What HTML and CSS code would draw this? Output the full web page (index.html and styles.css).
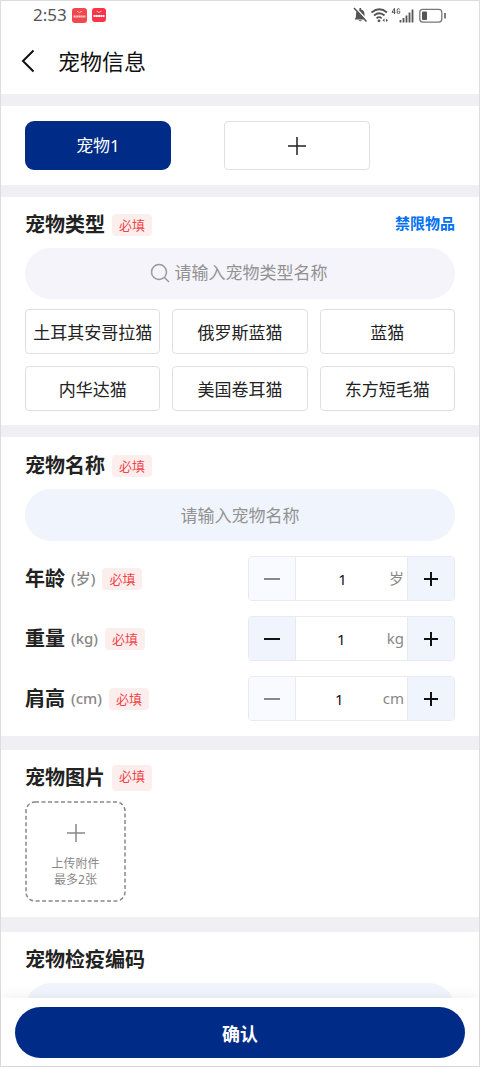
FILE: index.html
```html
<!DOCTYPE html>
<html lang="zh-CN">
<head>
<meta charset="utf-8">
<meta name="viewport" content="width=device-width, initial-scale=1">
<title>宠物信息</title>
<link rel="stylesheet" href="styles.css">
</head>
<body>
<div class="app">
  <div class="status">
    <span class="status-time">2:53</span>
    <svg class="status-app" width="15" height="15" viewBox="0 0 15 15"><rect width="15" height="15" rx="3" fill="#f0494d"/><path d="M5 3.200q2.500 3 5 0" fill="none" stroke="#fbb" stroke-width="1"/><path d="M1.500 8.500h12" stroke="#fcc" stroke-width="1.800" stroke-dasharray="1.500 .3"/></svg>
    <svg class="status-app" width="14" height="14" viewBox="0 0 14 14"><rect width="14" height="14" rx="3" fill="#fb3448"/><path d="M4.500 3q2.500 3 5 0" fill="none" stroke="#fbb" stroke-width="1"/><path d="M1.500 8h11" stroke="#fff" stroke-width="1.800" stroke-dasharray="2 .3"/></svg>
    <svg class="status-icons" width="94" height="18" viewBox="0 0 94 18" fill="none" stroke="#555">
      <path d="M1.500 13.500h11.500c-1.500-1.500-1.500-3-1.500-5.500 0-2.500-1.500-4.500-4.200-4.500S3 5.500 3 8c0 2.500 0 4-1.500 5.500z" fill="#555" stroke="none"/>
      <path d="M5.500 14.300h3.600q-1.800 2-3.600 0zM6.500 2h1.600v2H6.500z" fill="#555" stroke="none"/>
      <path d="M2.500 1.500l12 13" stroke="#fff" stroke-width="1.500"/>
      <path d="M1 2l12.500 13.500" stroke-width="1.500"/>
      <path d="M18.500 6.500q8-6.500 15.500 0M21 9.500q5.500-4.500 10.500 0M23.500 12.300q2.700-2.200 5.200 0" stroke-width="1.700"/>
      <circle cx="26" cy="14.800" r="1.400" fill="#555" stroke="none"/>
      <path d="M31.500 12.500L29.500 14.200l2 1.700zM33 12.500l2 1.700-2 1.700z" fill="#555" stroke="none"/>
      <path d="M41.500 8V2.300L39 6.300h3.500M46.700 3.600q-.3-1-1.200-1-1.300 0-1.300 1.500v2q0 1.500 1.300 1.500t1.300-1.500v-.8h-1.300" stroke-width="1"/>
      <path d="M47.500 14v2.500M50.500 12v4.500M53.500 9.500v7M56.500 6.500v10M59.500 3.500v13" stroke-width="1.800"/>
      <rect x="66.800" y="3.300" width="22" height="12.800" rx="3" stroke="#777" stroke-width="1.300"/>
      <rect x="69" y="5.500" width="5" height="8.500" rx="1" fill="#555" stroke="none"/>
      <path d="M92 7v5.500" stroke-width="1.500"/>
    </svg>
  </div>
  <header class="nav">
    <button class="back" type="button" aria-label="返回">
      <svg width="14" height="24" viewBox="0 0 14 24" fill="none" stroke="#111" stroke-width="2"><path d="M12.500 1.500L2 12l10.500 10.500"/></svg>
    </button>
    <h1 class="nav-title">宠物信息</h1>
  </header>

  <main class="content">
    <section class="card tabs">
      <button class="tab tab-active" type="button">宠物1</button>
      <button class="tab" type="button" aria-label="添加宠物">
        <svg width="20" height="20" viewBox="0 0 20 20" stroke="#222" stroke-width="1.500"><path d="M1 10h18M10 1v18"/></svg>
      </button>
    </section>

    <section class="card">
      <div class="heading">
        <h2 class="title"><label for="type">宠物类型</label></h2>
        <span class="badge">必填</span>
        <a class="link" href="#">禁限物品</a>
      </div>
      <div class="search">
        <svg width="20" height="20" viewBox="0 0 20 20" fill="none" stroke="#999" stroke-width="1.500"><circle cx="9" cy="9" r="7.500"/><path d="M14.500 14.500L19 19"/></svg>
        <input class="search-input" id="type" type="text" placeholder="请输入宠物类型名称">
      </div>
      <div class="chips">
        <button class="chip" type="button">土耳其安哥拉猫</button>
        <button class="chip" type="button">俄罗斯蓝猫</button>
        <button class="chip" type="button">蓝猫</button>
        <button class="chip" type="button">内华达猫</button>
        <button class="chip" type="button">美国卷耳猫</button>
        <button class="chip" type="button">东方短毛猫</button>
      </div>
    </section>

    <section class="card card-details">
      <div class="heading">
        <h2 class="title"><label for="name">宠物名称</label></h2>
        <span class="badge">必填</span>
      </div>
      <input class="pill" id="name" type="text" placeholder="请输入宠物名称">
      <div class="rows">
        <div class="row">
          <label class="title" for="age">年龄<span class="unit">(岁)</span></label>
          <span class="badge">必填</span>
          <div class="stepper">
            <button class="step" type="button" aria-label="减少年龄" disabled><svg width="16" height="16" viewBox="0 0 16 16"><path d="M0 8h16"/></svg></button>
            <input class="step-value" id="age" type="text" inputmode="numeric" value="1"><span class="step-unit">岁</span>
            <button class="step" type="button" aria-label="增加年龄"><svg width="16" height="16" viewBox="0 0 16 16"><path d="M1 8h14M8 1v14"/></svg></button>
          </div>
        </div>
        <div class="row">
          <label class="title" for="weight">重量<span class="unit">(kg)</span></label>
          <span class="badge">必填</span>
          <div class="stepper">
            <button class="step" type="button" aria-label="减少重量"><svg width="16" height="16" viewBox="0 0 16 16"><path d="M0 8h16"/></svg></button>
            <input class="step-value" id="weight" type="text" inputmode="numeric" value="1"><span class="step-unit">kg</span>
            <button class="step" type="button" aria-label="增加重量"><svg width="16" height="16" viewBox="0 0 16 16"><path d="M1 8h14M8 1v14"/></svg></button>
          </div>
        </div>
        <div class="row">
          <label class="title" for="height">肩高<span class="unit">(cm)</span></label>
          <span class="badge">必填</span>
          <div class="stepper">
            <button class="step" type="button" aria-label="减少肩高" disabled><svg width="16" height="16" viewBox="0 0 16 16"><path d="M0 8h16"/></svg></button>
            <input class="step-value" id="height" type="text" inputmode="numeric" value="1"><span class="step-unit">cm</span>
            <button class="step" type="button" aria-label="增加肩高"><svg width="16" height="16" viewBox="0 0 16 16"><path d="M1 8h14M8 1v14"/></svg></button>
          </div>
        </div>
      </div>
    </section>

    <section class="card card-photos">
      <div class="heading">
        <h2 class="title">宠物图片</h2>
        <span class="badge badge-tall">必填</span>
      </div>
      <button class="upload" type="button">
        <svg class="dash" width="101" height="101" viewBox="0 0 101 101" fill="none" stroke="#888" stroke-width="1.500"><rect x="1" y="1" width="99" height="99" rx="9" stroke-dasharray="4 2.500"/></svg>
        <svg width="20" height="20" viewBox="0 0 20 20" stroke="#888" stroke-width="1.500"><path d="M1 10h18M10 1v18"/></svg>
        <span class="upload-text">上传附件<br>最多2张</span>
      </button>
    </section>

    <section class="card">
      <div class="heading">
        <h2 class="title"><label for="code">宠物检疫编码</label></h2>
      </div>
      <input class="pill" id="code" type="text">
    </section>
  </main>

  <footer class="footer">
    <button class="confirm" type="button">确认</button>
  </footer>
</div>
</body>
</html>
```

FILE: styles.css
```css
* {
  box-sizing: border-box;
}

body {
  margin: 0;
  color: #222;
  background: #fff;
  font-family: "Noto Sans", "Noto Sans CJK SC", sans-serif;
}

button,
input {
  margin: 0;
  padding: 0;
  border: 0;
  color: inherit;
  background: none;
  font: inherit;
  outline: 0;
}

svg {
  flex: none;
}

.app {
  display: flex;
  flex-direction: column;
  height: 100vh;
  border: 1px solid #dcdcdc;
}

.status {
  display: flex;
  align-items: center;
  height: 28px;
  padding: 0 32px;
  gap: 5px;
}

.status-time {
  color: #555;
  font-size: 17px;
  line-height: 24px;
}

.status-icons {
  margin-left: auto;
}

.nav {
  display: flex;
  align-items: center;
  gap: 23px;
  height: 65px;
  padding: 0 21px 2px 20px;
}

.back {
  display: flex;
}

.nav-title {
  margin: 0;
  color: #111;
  font-size: 22px;
  font-weight: 400;
  line-height: 32px;
}

.content {
  display: flex;
  flex: 1;
  flex-direction: column;
  gap: 12px;
  min-height: 0;
  padding-top: 12px;
  overflow-y: auto;
  background: #efeff4;
  scrollbar-width: none;
}

.card {
  flex: none;
  padding: 14px 24px;
  background: #fff;
}

.tabs {
  display: flex;
  gap: 53px;
  padding-block: 15px;
}

.tab {
  display: flex;
  align-items: center;
  justify-content: center;
  width: 146px;
  height: 49px;
  border: 1px solid #dfe0e3;
  border-radius: 4px;
  font-size: 17px;
}

.tab-active {
  padding-bottom: 3px;
  border: 0;
  border-radius: 9px;
  color: #fff;
  background: #002b87;
}

.heading {
  display: flex;
  align-items: center;
  height: 27px;
  margin-bottom: 10px;
}

.title {
  margin: 0;
  font-size: 20px;
  font-weight: 700;
  line-height: 27px;
}

.badge {
  margin-left: 7px;
  padding: 0 7px;
  border-radius: 4px;
  color: #f04446;
  background: #fdeeee;
  font-size: 13px;
  line-height: 22px;
}

.badge-tall {
  padding-bottom: 4px;
}

.link {
  margin-left: auto;
  padding-bottom: 4px;
  color: #0070f5;
  font-size: 15px;
  font-weight: 700;
  line-height: 24px;
  text-decoration: none;
}

.search {
  display: flex;
  align-items: center;
  justify-content: center;
  gap: 5px;
  height: 51px;
  padding-bottom: 2px;
  margin-bottom: 10px;
  border-radius: 26px;
  background: #f4f4fa;
}

.search-input {
  width: 156px;
  font-size: 17px;
}

::placeholder {
  color: #929292;
  opacity: 1;
}

.chips {
  display: grid;
  grid-template-columns: repeat(3, 1fr);
  gap: 12px;
}

.chip {
  height: 45px;
  border: 1px solid #dfdfe2;
  border-radius: 4px;
  font-size: 17px;
  white-space: nowrap;
}

.pill {
  display: block;
  width: 100%;
  height: 52px;
  border-radius: 26px;
  background: #f0f4fc;
  font-size: 17px;
  text-align: center;
}

.card-details {
  margin-bottom: 2px;
  padding-block: 15px;
}

.rows {
  display: grid;
  gap: 15px;
  margin-top: 15px;
}

.row {
  display: flex;
  align-items: center;
}

.unit {
  margin-left: 6px;
  color: #888;
  font-size: 15px;
  font-weight: 500;
  vertical-align: 2px;
}

.stepper {
  display: flex;
  align-items: center;
  width: 207px;
  height: 45px;
  margin-left: auto;
  overflow: hidden;
  border: 1px solid #e8eaef;
  border-radius: 4px;
}

.step {
  display: flex;
  align-items: center;
  justify-content: center;
  align-self: stretch;
  flex: none;
  width: 47px;
  border-left: 1px solid #e8eaef;
  background: #f0f4fc;
  stroke: #111;
  stroke-width: 2;
}

.step:first-child {
  border-right: 1px solid #e8eaef;
  border-left: 0;
}

.step:disabled {
  background: #f8faff;
  stroke: #888;
}

.step-value {
  flex: 1;
  min-width: 0;
  color: #111;
  font-size: 15px;
  text-align: center;
}

.step-unit {
  padding: 0 3px 2px 0;
  color: #888;
  font-size: 15px;
  line-height: 24px;
}

.card-photos {
  margin-bottom: 3px;
  padding-bottom: 15px;
}

.upload {
  position: relative;
  display: flex;
  flex-direction: column;
  align-items: center;
  width: 101px;
  height: 101px;
  padding-top: 22px;
}

.dash {
  position: absolute;
  inset: 0;
}

.upload-text {
  margin-top: 13px;
  color: #888;
  font-size: 12px;
  line-height: 16px;
}

.footer {
  z-index: 1;
  padding: 9px 14px 8px;
  background: #fff;
  box-shadow: 0 -2px 12px rgba(0, 0, 0, 0.06);
}

.confirm {
  display: block;
  width: 100%;
  height: 51px;
  border-radius: 26px;
  color: #fff;
  background: #002b87;
  font-size: 18px;
  font-weight: 700;
}
```
